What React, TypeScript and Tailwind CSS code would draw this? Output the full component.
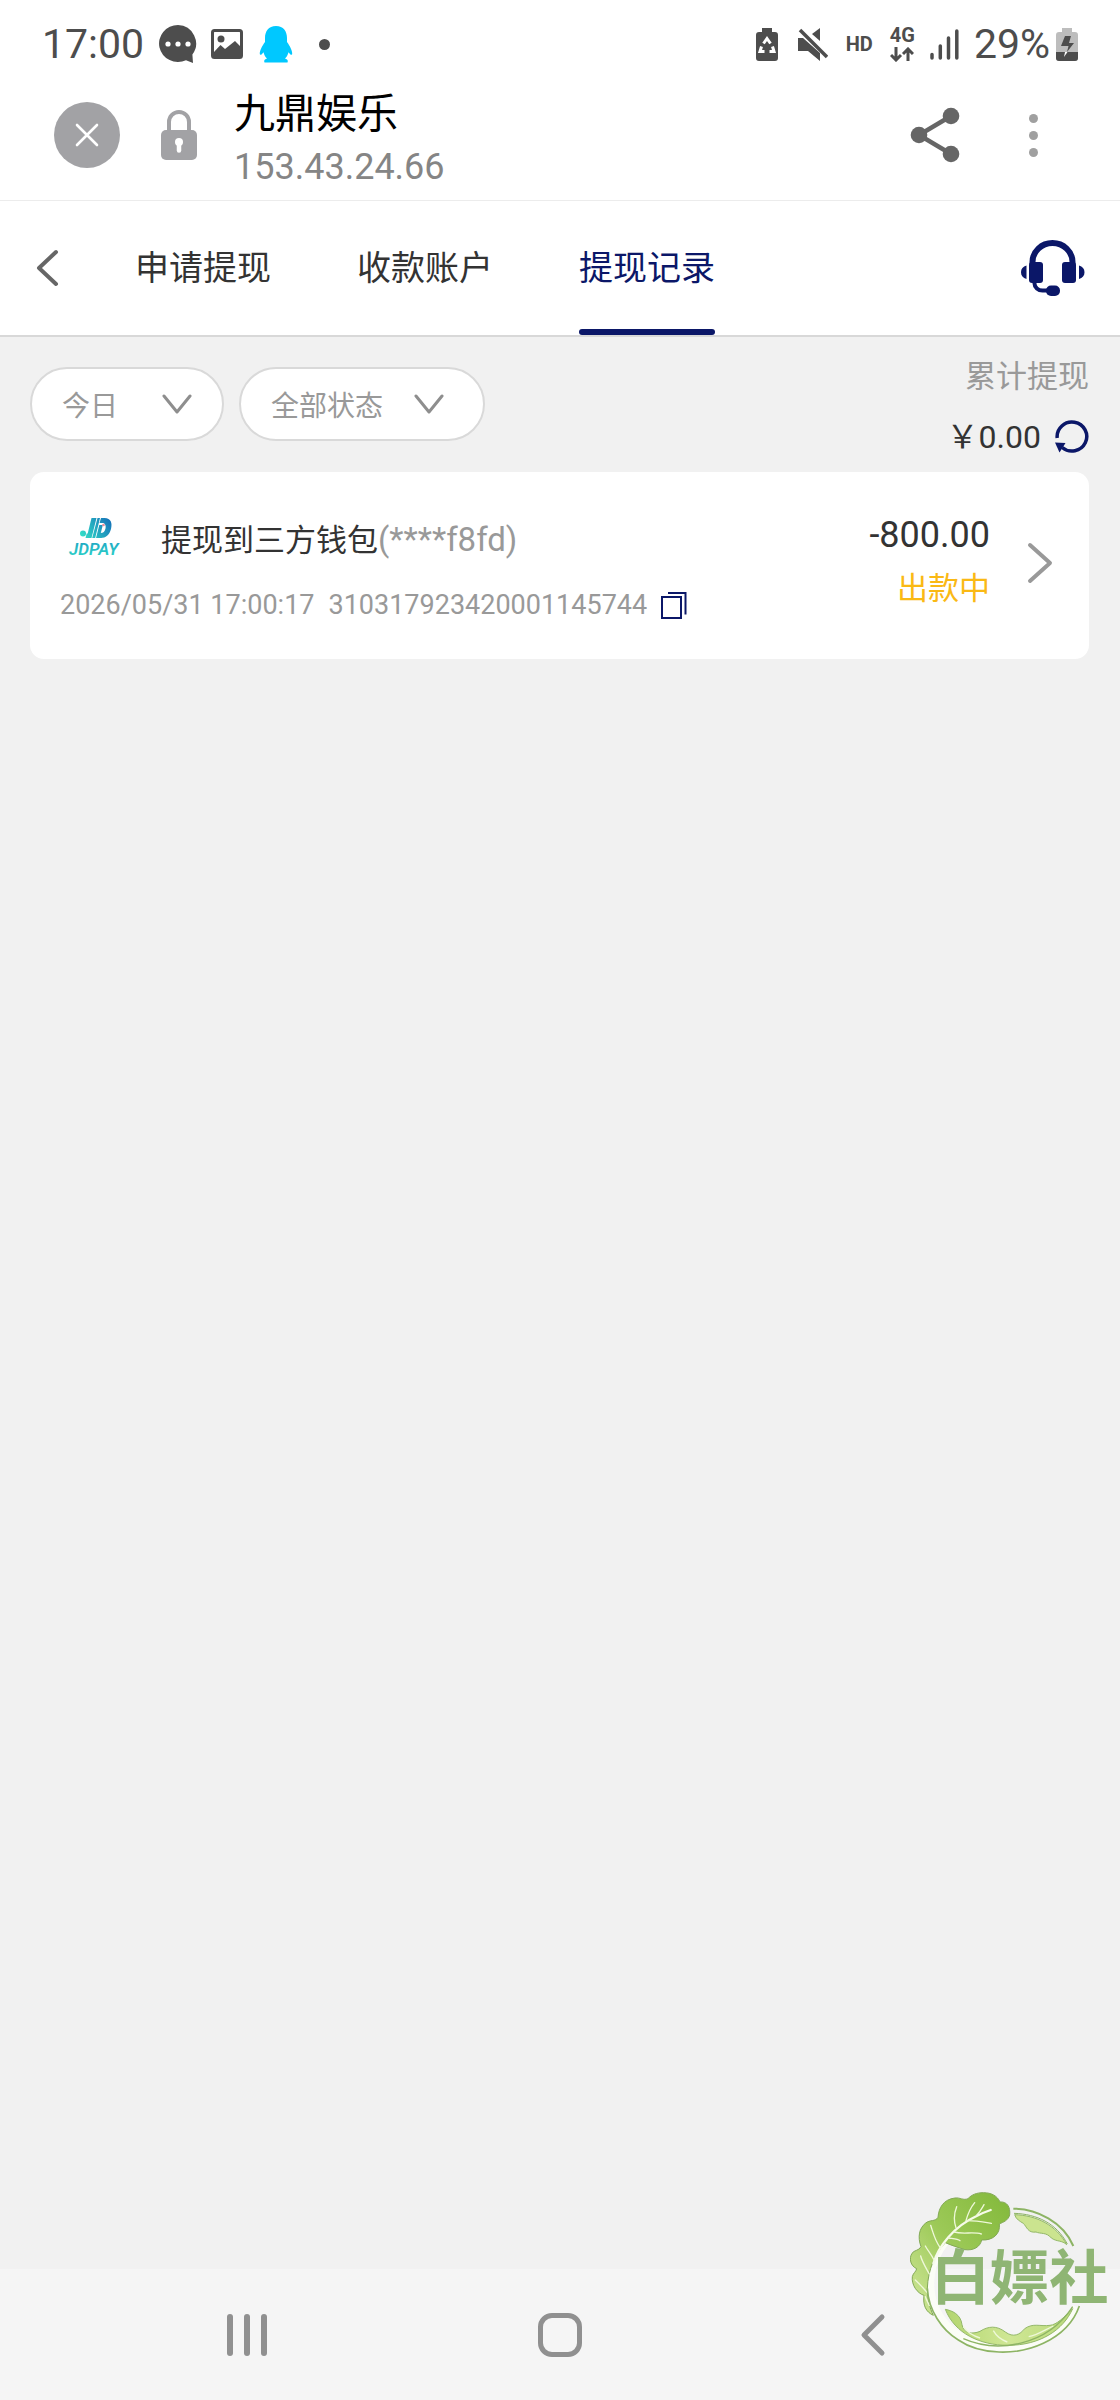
import React, { useState } from 'react';

const NAVY = '#0b1768';

interface IconProps {
  className?: string;
}

const ChatIcon: React.FC<IconProps> = ({ className }) => (
  <svg width="38" height="38" viewBox="0 0 38 38" className={className} aria-hidden="true">
    <path d="M19 0a19 18.500 0 1 0 8 35.300L34 38l-.6-8.500A18.500 18.500 0 0 0 19 0z" fill="#4d4d4d" />
    <circle cx="9" cy="19" r="2.600" fill="#fff" />
    <circle cx="19" cy="19" r="2.600" fill="#fff" />
    <circle cx="29" cy="19" r="2.600" fill="#fff" />
  </svg>
);

const PictureIcon: React.FC<IconProps> = ({ className }) => (
  <svg width="32" height="30" viewBox="0 0 32 30" className={className} aria-hidden="true">
    <rect x="1.500" y="1.500" width="29" height="27" rx="2" fill="#fff" stroke="#4d4d4d" strokeWidth="3" />
    <circle cx="10" cy="10" r="3.500" fill="#4d4d4d" />
    <path d="M3 23l6.500-7 4.500 4 10-8 5 5v10H3z" fill="#4d4d4d" />
  </svg>
);

const PenguinIcon: React.FC<IconProps> = ({ className }) => (
  <svg width="34" height="37" viewBox="0 0 34 37" className={className} aria-hidden="true">
    <path
      d="M17 0C9.500 0 6 5.500 6 12v4C3 20 .5 25 .8 28c.2 1.600 2 .6 3.700-1.800.6 2.600 1.700 4.600 3.500 6.300-2.600.8-3.300 2-2.500 4h23c.8-2 .1-3.200-2.500-4 1.800-1.700 2.900-3.700 3.500-6.300 1.700 2.400 3.500 3.400 3.700 1.800.3-3-2.200-8-5.200-12v-4C28 5.500 24.500 0 17 0z"
      fill="#00c8ff"
    />
  </svg>
);

const EcoBatteryIcon: React.FC<IconProps> = ({ className }) => (
  <svg width="22" height="33" viewBox="0 0 22 33" className={className} aria-hidden="true">
    <path d="M6 0h10v4h3a3 3 0 0 1 3 3v23a3 3 0 0 1-3 3H3a3 3 0 0 1-3-3V7a3 3 0 0 1 3-3h3z" fill="#4d4d4d" />
    <g fill="none" stroke="#fff" strokeWidth="3">
      <path d="M7.500 15.500L11 10.500l3.500 5" />
      <path d="M16.500 18.500l1.500 5h-4.500" />
      <path d="M5.500 18.500l-1.500 5h4.500" />
    </g>
  </svg>
);

const MuteIcon: React.FC<IconProps> = ({ className }) => (
  <svg width="30" height="33" viewBox="0 0 30 33" className={className} aria-hidden="true">
    <path d="M0 10h5l17 15v8L10 23H0z" fill="#4d4d4d" />
    <path d="M22 0v13l-8-7z" fill="#4d4d4d" />
    <path d="M2 2l27 27" stroke="#4d4d4d" strokeWidth="3.600" />
  </svg>
);

const DataArrowsIcon: React.FC<IconProps> = ({ className }) => (
  <svg width="24" height="15" viewBox="0 0 24 15" className={className} aria-hidden="true">
    <path d="M6 0v13M1 8l5 5 5-5M18 14V2M13 7l5-5 5 5" fill="none" stroke="#4d4d4d" strokeWidth="3" />
  </svg>
);

const SignalIcon: React.FC<IconProps> = ({ className }) => (
  <svg width="29" height="31" viewBox="0 0 29 31" className={className} aria-hidden="true">
    <path d="M2 25.500v3.500M10.300 17v12M18.500 9v20M26.800 2v27" stroke="#4d4d4d" strokeWidth="3.500" strokeLinecap="round" />
  </svg>
);

const ChargingBatteryIcon: React.FC<IconProps> = ({ className }) => (
  <svg width="22" height="33" viewBox="0 0 22 33" className={className} aria-hidden="true">
    <path d="M6 0h10v4h3a3 3 0 0 1 3 3v23a3 3 0 0 1-3 3H3a3 3 0 0 1-3-3V7a3 3 0 0 1 3-3h3z" fill="#bdbdbd" />
    <path d="M0 24h22v6a3 3 0 0 1-3 3H3a3 3 0 0 1-3-3z" fill="#4d4d4d" />
    <path d="M9 8h6l-2 7h5L11 24l1.500-6H5z" fill="#4d4d4d" />
    <path d="M9 24h2.500L8 29z" fill="#fff" />
  </svg>
);

const LockIcon: React.FC<IconProps> = ({ className }) => (
  <svg width="38" height="50" viewBox="0 0 38 50" className={className} aria-hidden="true">
    <path d="M9 22V12a10 10 0 0 1 20 0v10" fill="none" stroke="#a2a2a5" strokeWidth="4" />
    <rect x="1" y="20" width="36" height="30" rx="5" fill="#a2a2a5" />
    <circle cx="19" cy="32" r="4" fill="#fff" />
    <path d="M19 33v7.500" stroke="#fff" strokeWidth="4.500" strokeLinecap="round" />
  </svg>
);

const ShareIcon: React.FC<IconProps> = ({ className }) => (
  <svg width="50" height="56" viewBox="0 0 50 56" className={className} aria-hidden="true">
    <path d="M41 9L9 28l32 19" fill="none" stroke="#666" strokeWidth="4.500" />
    <circle cx="41" cy="9" r="8.300" fill="#666" />
    <circle cx="9" cy="28" r="8.300" fill="#666" />
    <circle cx="41" cy="47" r="8.300" fill="#666" />
  </svg>
);

const HeadsetIcon: React.FC<IconProps> = ({ className }) => (
  <svg width="64" height="56" viewBox="0 0 64 56" className={className} aria-hidden="true">
    <path d="M11.500 24v-2a20 19 0 0 1 40 0v2" fill="none" stroke={NAVY} strokeWidth="6" />
    <rect x="8" y="22" width="14" height="21" rx="3" fill={NAVY} />
    <rect x="41" y="22" width="14" height="21" rx="3" fill={NAVY} />
    <path d="M5.500 25.500v13.500C2 38 0 36 0 32.300S2 26.500 5.500 25.500zM58 25.500v13.500c3.500-1 5.500-3 5.500-6.700S61.500 26.500 58 25.500z" fill={NAVY} />
    <path d="M13.500 42v1.500a8 7 0 0 0 8 7H29" fill="none" stroke={NAVY} strokeWidth="4" />
    <rect x="25" y="45.500" width="14" height="10.500" rx="5" fill={NAVY} />
  </svg>
);

const RefreshIcon: React.FC<IconProps> = ({ className }) => (
  <svg width="34" height="34" viewBox="0 0 34 34" className={className} aria-hidden="true">
    <path d="M2.200 18a14.800 14.500 0 1 1 5 9.500" fill="none" stroke={NAVY} strokeWidth="3.500" />
    <path d="M0 22.500l10.500.5L4.500 32.500z" fill={NAVY} />
  </svg>
);

const CopyIcon: React.FC<IconProps> = ({ className }) => (
  <svg width="26" height="28" viewBox="0 0 26 28" className={className} aria-hidden="true">
    <rect x="1" y="6" width="19" height="21" fill="none" stroke={NAVY} strokeWidth="2" />
    <path d="M7 2h17.500v21.500" fill="none" stroke={NAVY} strokeWidth="2" />
  </svg>
);

const DownIcon: React.FC<IconProps> = ({ className }) => (
  <svg width="30" height="20" viewBox="0 0 30 20" className={className} aria-hidden="true">
    <path d="M2 2l13 16L28 2" fill="none" stroke="#8e8e8e" strokeWidth="3" strokeLinecap="round" strokeLinejoin="round" />
  </svg>
);

const JdPayLogo: React.FC<IconProps> = ({ className }) => (
  <svg width="60" height="44" viewBox="0 0 60 44" className={className} role="img">
    <defs>
      <linearGradient id="jd" x1="14" y1="23" x2="42" y2="3" gradientUnits="userSpaceOnUse">
        <stop offset="0" stopColor="#35e0c8" />
        <stop offset="1" stopColor="#1470b8" />
      </linearGradient>
      <linearGradient id="jdText" x1="0" y1="0" x2="0" y2="1">
        <stop offset="0" stopColor="#1f9fc4" />
        <stop offset="1" stopColor="#2fd9c8" />
      </linearGradient>
    </defs>
    <path
      d="M23.500 3h5l-5 20h-6l1.200-4.500h1zM29.500 3h2.500l-4.800 20h-3zM33 3h3.500c6.500 0 8 5 6.500 11s-5.500 9-10 9h-5l3.300-13h3.500l-2 8c2.500 0 4-1.500 4.700-4.500s-.5-5.500-3-5.500h-3z"
      fill="url(#jd)"
    />
    <circle cx="15" cy="18.500" r="3" fill="url(#jd)" />
    <circle cx="35.500" cy="10" r="1.300" fill="#e88b9a" />
    <text
      x="1"
      y="40"
      fontFamily="Roboto, sans-serif"
      fontSize="17"
      fontWeight="600"
      fontStyle="italic"
      fill="url(#jdText)"
    >
      JDPAY
    </text>
  </svg>
);

const CabbageLogo: React.FC<IconProps> = ({ className }) => (
  <svg width="204" height="164" viewBox="90 90 612 492" className={className} role="img">
    <defs>
      <linearGradient id="leaf" x1="1" y1="0" x2="0" y2="1">
        <stop offset="0" stopColor="#82b83a" />
        <stop offset="0.500" stopColor="#9cc957" />
        <stop offset="1" stopColor="#d3e99d" />
      </linearGradient>
      <linearGradient id="leafLow" x1="0" y1="0" x2="1" y2="0">
        <stop offset="0" stopColor="#b3d56f" />
        <stop offset="0.500" stopColor="#cfe794" />
        <stop offset="1" stopColor="#b9d97a" />
      </linearGradient>
    </defs>
    {/* white rib running round the ring */}
    <path
      d="M215 225C160 280 140 350 158 420C185 510 270 565 375 562C480 560 550 510 588 440"
      fill="none"
      stroke="#fbfdf6"
      strokeWidth="22"
    />
    {/* big curled leaf */}
    <path
      d="M310 98C335 98 352 108 360 126C380 124 392 140 389 165C384 182 370 186 358 192C362 222 338 242 305 240C300 262 280 272 255 269C232 262 215 256 196 248C165 280 144 330 142 385C142 420 150 445 160 466C138 456 128 436 132 406C112 400 94 375 97 350C100 338 108 336 110 326C92 318 86 296 96 280C102 270 118 272 123 260C112 230 118 205 136 190C150 178 166 186 174 172C176 144 190 118 225 114C240 112 250 122 264 116C275 104 290 98 310 98Z"
      fill="url(#leaf)"
      stroke="#83a956"
      strokeWidth="3"
    />
    <path
      d="M160 310C175 260 220 200 290 168C305 160 320 154 332 150"
      fill="none"
      stroke="#f6fbe9"
      strokeWidth="7"
      strokeLinecap="round"
    />
    <path
      d="M228 203C220 180 222 160 230 140M258 182C264 160 270 145 284 128M262 182C290 182 310 186 334 190M290 166C302 154 306 144 312 134M222 216C250 224 280 214 304 222M206 234C222 236 234 236 240 242M180 262C164 240 160 220 152 196M162 300C152 280 142 270 136 258M148 342C136 320 126 305 122 288M144 400C130 385 122 375 106 360M148 436C142 424 138 416 136 410"
      fill="none"
      stroke="#eef8d8"
      strokeWidth="4"
      strokeLinecap="round"
    />
    {/* small leaves inside the ring */}
    <path
      d="M196 448C216 452 242 462 246 494C250 520 276 524 300 514C325 498 350 496 376 516C400 534 420 524 434 506C460 488 480 500 510 496C530 494 550 474 578 446C550 510 480 556 384 556C300 556 224 520 196 448Z"
      fill="url(#leafLow)"
      stroke="#93b868"
      strokeWidth="3"
    />
    <path
      d="M250 500C264 520 280 528 300 534M340 512C350 530 365 540 382 546M520 498C490 512 470 526 446 530"
      fill="none"
      stroke="#eef8d8"
      strokeWidth="4"
    />
    <path
      d="M404 164C470 166 530 196 560 254C546 240 530 246 514 234C500 216 480 222 468 216C444 220 440 200 430 190C420 184 408 178 404 164Z"
      fill="#cbe48f"
      stroke="#93b868"
      strokeWidth="3"
    />
    {/* outlines */}
    <g fill="none" stroke="#8db464">
      <path d="M142 385C145 450 185 510 235 540C300 585 410 588 490 550C545 524 580 490 598 438" strokeWidth="5" />
      <path d="M250 536C350 580 500 560 578 440" strokeWidth="4" />
      <path d="M400 146C470 146 550 186 580 258" strokeWidth="6" />
      <path d="M402 160C470 162 530 190 562 252" strokeWidth="3" />
    </g>
    <text
      x="152"
      y="418"
      fontFamily="'Noto Sans CJK SC', sans-serif"
      fontSize="178"
      fontWeight="700"
      fill="#8fb574"
    >
      白嫖社
    </text>
  </svg>
);

const StatusBar: React.FC = () => (
  <div className="flex h-[88px] items-center justify-between px-[42px] text-[#4d4d4d]">
    <div className="flex items-center">
      <span className="text-[41px] leading-none">17:00</span>
      <ChatIcon className="ml-[15px]" />
      <PictureIcon className="ml-3.5" />
      <PenguinIcon className="ml-4" />
      <span className="ml-[26px] size-[11px] rounded-full bg-[#4d4d4d]" />
    </div>
    <div className="flex items-center">
      <EcoBatteryIcon />
      <MuteIcon className="ml-5" />
      <span className="ml-[18px] text-xl leading-none font-bold">HD</span>
      <div className="ml-[17px] flex flex-col items-center gap-1">
        <span className="text-xl leading-4 font-bold">4G</span>
        <DataArrowsIcon />
      </div>
      <SignalIcon className="ml-[15px]" />
      <span className="ml-[15px] text-[41px] leading-none">29%</span>
      <ChargingBatteryIcon className="ml-1.5" />
    </div>
  </div>
);

const BrowserBar: React.FC = () => (
  <header className="flex h-[113px] items-start border-b border-[#ececec] pr-[82px] pl-[54px]">
    <button type="button" aria-label="关闭" className="mt-3.5 flex size-[66px] items-center justify-center rounded-full bg-[#a2a2a5]">
      <svg width="24" height="24" viewBox="0 0 24 24" aria-hidden="true">
        <path d="M2 2l20 20M22 2L2 22" stroke="#fff" strokeWidth="2.600" strokeLinecap="round" />
      </svg>
    </button>
    <LockIcon className="mt-[22px] ml-10" />
    <div className="ml-9 flex-1">
      <h1 className="text-[41px] leading-[52px] text-black">九鼎娱乐</h1>
      <p className="text-[36px] leading-[54px] text-[#858585]">153.43.24.66</p>
    </div>
    <button type="button" aria-label="分享" className="mt-[19px]">
      <ShareIcon />
    </button>
    <button type="button" aria-label="更多" className="mt-6 ml-[69px] flex flex-col items-center gap-2 py-0.5">
      <span className="size-[9px] rounded-full bg-[#a0a0a0]" />
      <span className="size-[9px] rounded-full bg-[#a0a0a0]" />
      <span className="size-[9px] rounded-full bg-[#a0a0a0]" />
    </button>
  </header>
);

const tabs = ['申请提现', '收款账户', '提现记录'];

const TabBar: React.FC = () => {
  const [active, setActive] = useState('提现记录');

  return (
    <nav className="flex h-[136px] items-center border-b-2 border-[#d8d8d8] pr-[35px] pl-9">
      <button type="button" aria-label="返回">
        <svg width="24" height="38" viewBox="0 0 24 38" aria-hidden="true">
          <path d="M20 3L3 19l17 16" fill="none" stroke="#666" strokeWidth="4" strokeLinecap="round" strokeLinejoin="round" />
        </svg>
      </button>
      <div className="ml-[75px] flex flex-1 gap-[86px] self-stretch">
        {tabs.map((tab) => (
          <button
            key={tab}
            type="button"
            onClick={() => setActive(tab)}
            className={`flex flex-col justify-end text-[34px] leading-[50px] ${
              active === tab ? 'text-[#0b1768]' : 'text-[#333]'
            }`}
          >
            <span className="mb-9">{tab}</span>
            <span className={`h-1.5 w-full rounded-full ${active === tab ? 'bg-[#0b1768]' : 'bg-transparent'}`} />
          </button>
        ))}
      </div>
      <button type="button" aria-label="客服">
        <HeadsetIcon />
      </button>
    </nav>
  );
};

interface FilterProps {
  label: string;
  options: string[];
  className: string;
  iconClassName: string;
}

const Filter: React.FC<FilterProps> = ({ label, options, className, iconClassName }) => (
  <label className={`relative flex h-[74px] items-center rounded-[37px] border-2 border-[#d9d9d9] bg-white ${className}`}>
    <select
      aria-label={label}
      className="h-full w-full appearance-none bg-transparent pt-1.5 pl-[30px] text-[28px] text-[#999] outline-none"
    >
      {options.map((option) => (
        <option key={option}>{option}</option>
      ))}
    </select>
    <DownIcon className={`pointer-events-none absolute ${iconClassName}`} />
  </label>
);

const Filters: React.FC = () => (
  <div className="flex items-start justify-between pt-2.5 pr-[31px] pb-[5px] pl-[30px]">
    <div className="mt-5 flex gap-[15px]">
      <Filter label="日期" options={['今日', '昨日', '近七日']} className="w-[194px]" iconClassName="right-[30px]" />
      <Filter label="状态" options={['全部状态', '出款中', '已完成']} className="w-[246px]" iconClassName="right-[39px]" />
    </div>
    <div className="flex flex-col items-end">
      <span className="text-[31px] leading-[60px] text-[#999]">累计提现</span>
      <div className="flex items-center gap-3.5 text-[#333]">
        <span className="text-[32px] leading-[60px]">￥0.00</span>
        <button type="button" aria-label="刷新">
          <RefreshIcon />
        </button>
      </div>
    </div>
  </div>
);

const RecordCard: React.FC = () => (
  <article className="mr-[31px] ml-[30px] flex items-center rounded-[14px] bg-white pt-[34px] pr-[35px] pb-6 pl-[30px]">
    <div className="flex-1">
      <div className="flex items-center">
        <JdPayLogo className="mb-2 ml-2" />
        <h2 className="ml-[33px] text-[31px] leading-[68px] text-[#333]">
          提现到三方钱包<span className="text-[33px] text-[#999]">(****f8fd)</span>
        </h2>
      </div>
      <div className="flex items-center text-[27px] leading-[60px] text-[#999]">
        <time>2026/05/31 17:00:17</time>
        <span className="ml-3.5">310317923420001145744</span>
        <button type="button" aria-label="复制" className="ml-3.5">
          <CopyIcon />
        </button>
      </div>
    </div>
    <div className="mb-[18px] flex flex-col items-end">
      <span className="text-[36px] leading-[54px] text-[#333]">-800.00</span>
      <span className="text-[31px] leading-[54px] text-[#fab915]">出款中</span>
    </div>
    <button type="button" aria-label="详情" className="mb-4 ml-9">
      <svg width="28" height="42" viewBox="0 0 28 42" aria-hidden="true">
        <path d="M4 3l20 18L4 39" fill="none" stroke="#999" strokeWidth="4" strokeLinecap="round" strokeLinejoin="round" />
      </svg>
    </button>
  </article>
);

const SystemNav: React.FC = () => (
  <footer className="grid h-[131px] grid-cols-3 items-center justify-items-center bg-[#f5f5f5] px-[91px]">
    <button type="button" aria-label="最近任务" className="flex gap-[11px]">
      <span className="h-[42px] w-1.5 rounded-full bg-[#909090]" />
      <span className="h-[42px] w-1.5 rounded-full bg-[#909090]" />
      <span className="h-[42px] w-1.5 rounded-full bg-[#909090]" />
    </button>
    <button type="button" aria-label="主页" className="size-11 rounded-[14px] border-[5px] border-[#909090]" />
    <button type="button" aria-label="返回上一页">
      <svg width="26" height="44" viewBox="0 0 26 44" aria-hidden="true">
        <path d="M22 4L4 22l18 18" fill="none" stroke="#909090" strokeWidth="5" strokeLinecap="round" strokeLinejoin="round" />
      </svg>
    </button>
  </footer>
);

const App: React.FC = () => (
  <div className="relative flex min-h-screen flex-col bg-[#f1f1f1] font-[Roboto,'Noto_Sans_CJK_SC',sans-serif]">
    <div className="bg-white">
      <StatusBar />
      <BrowserBar />
      <TabBar />
    </div>
    <main className="flex flex-1 flex-col">
      <Filters />
      <RecordCard />
    </main>
    <SystemNav />
    <CabbageLogo className="pointer-events-none absolute right-1.5 bottom-[46px]" />
  </div>
);

export default App;
